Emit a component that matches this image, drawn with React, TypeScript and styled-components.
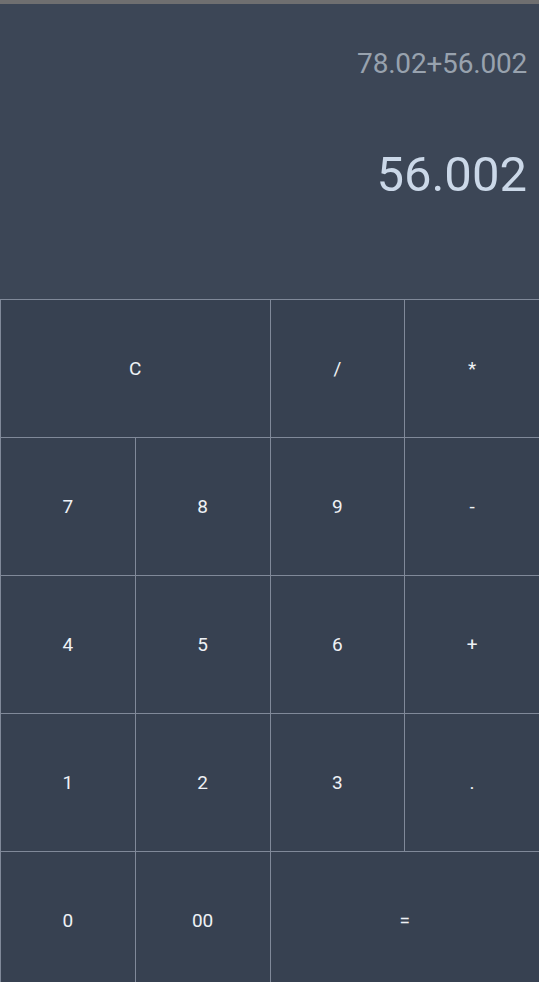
import React from "react";
import styled, { createGlobalStyle } from "styled-components";

const Global = createGlobalStyle`
  html, body { margin: 0; padding: 0; background: #374151; overflow: hidden; }
  body { font-family: Roboto, "Liberation Sans", sans-serif; }
`;

const Screen = styled.div`
  width: 539px;
  height: 982px;
  display: flex;
  flex-direction: column;
  overflow: hidden;
  background: #374151;
`;

const StatusStrip = styled.div`
  height: 4px;
  background: #6f6f70;
  flex: none;
`;

const Display = styled.div`
  height: 295px;
  flex: none;
  background: #3c4656;
  display: flex;
  flex-direction: column;
  align-items: flex-end;
  padding: 44px 12px 0 0;
  box-sizing: border-box;
`;

const Expression = styled.div`
  font-size: 28px;
  letter-spacing: -0.2px;
  color: #98a2ae;
  line-height: 32px;
`;

const Result = styled.div`
  margin-top: 67px;
  font-size: 49px;
  letter-spacing: 0;
  color: #cbd8e8;
  line-height: 56px;
`;

const Pad = styled.div`
  display: grid;
  grid-template-columns: repeat(4, 1fr);
  grid-auto-rows: 137px;
  gap: 1px;
  padding: 1px 0 0 1px;
  background: #808999;
  flex: none;
`;

const Key = styled.div<{ $span?: number }>`
  grid-column: span ${(p) => p.$span ?? 1};
  background: #374151;
  color: #eef1f5;
  font-size: 19px;
  display: flex;
  align-items: center;
  justify-content: center;
`;

const keys: [string, number?][] = [
  ["C", 2], ["/"], ["*"],
  ["7"], ["8"], ["9"], ["-"],
  ["4"], ["5"], ["6"], ["+"],
  ["1"], ["2"], ["3"], ["."],
  ["0"], ["00"], ["=", 2],
];

export default function App() {
  return (
    <Screen>
      <Global />
      <StatusStrip />
      <Display>
        <Expression>78.02+56.002</Expression>
        <Result>56.002</Result>
      </Display>
      <Pad>
        {keys.map(([label, span], i) => (
          <Key key={i} $span={span}>{label}</Key>
        ))}
      </Pad>
    </Screen>
  );
}
